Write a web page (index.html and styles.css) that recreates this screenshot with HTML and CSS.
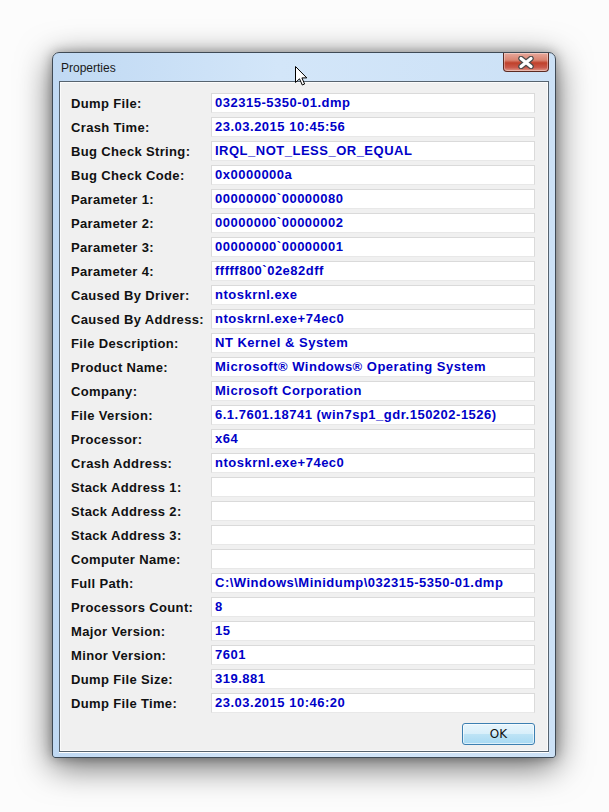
FILE: index.html
```html
<!DOCTYPE html>
<html lang="en">
<head>
  <meta charset="UTF-8">
  <meta name="viewport" content="width=device-width, initial-scale=1.0">
  <title>Properties</title>
  <link rel="stylesheet" href="styles.css">
</head>
<body>
  <div class="window">
    <div class="titlebar">
      <span class="title">Properties</span>
      <span class="close">
        <svg width="20" height="13" viewBox="0 0 20 13">
          <path d="M5 2.5 L15 10.5 M15 2.5 L5 10.5" stroke="#4a4a4a" stroke-width="5.5" stroke-linecap="round"/>
          <path d="M5 2.5 L15 10.5 M15 2.5 L5 10.5" stroke="#fff" stroke-width="3.2" stroke-linecap="round"/>
        </svg>
      </span>
    </div>
    <div class="client">
      <div class="props">
        <div class="row"><span class="label">Dump File:</span><span class="field">032315-5350-01.dmp</span></div>
        <div class="row"><span class="label">Crash Time:</span><span class="field">23.03.2015 10:45:56</span></div>
        <div class="row"><span class="label">Bug Check String:</span><span class="field">IRQL_NOT_LESS_OR_EQUAL</span></div>
        <div class="row"><span class="label">Bug Check Code:</span><span class="field">0x0000000a</span></div>
        <div class="row"><span class="label">Parameter 1:</span><span class="field">00000000`00000080</span></div>
        <div class="row"><span class="label">Parameter 2:</span><span class="field">00000000`00000002</span></div>
        <div class="row"><span class="label">Parameter 3:</span><span class="field">00000000`00000001</span></div>
        <div class="row"><span class="label">Parameter 4:</span><span class="field">fffff800`02e82dff</span></div>
        <div class="row"><span class="label">Caused By Driver:</span><span class="field">ntoskrnl.exe</span></div>
        <div class="row"><span class="label">Caused By Address:</span><span class="field">ntoskrnl.exe+74ec0</span></div>
        <div class="row"><span class="label">File Description:</span><span class="field">NT Kernel &amp; System</span></div>
        <div class="row"><span class="label">Product Name:</span><span class="field">Microsoft® Windows® Operating System</span></div>
        <div class="row"><span class="label">Company:</span><span class="field">Microsoft Corporation</span></div>
        <div class="row"><span class="label">File Version:</span><span class="field">6.1.7601.18741 (win7sp1_gdr.150202-1526)</span></div>
        <div class="row"><span class="label">Processor:</span><span class="field">x64</span></div>
        <div class="row"><span class="label">Crash Address:</span><span class="field">ntoskrnl.exe+74ec0</span></div>
        <div class="row"><span class="label">Stack Address 1:</span><span class="field"></span></div>
        <div class="row"><span class="label">Stack Address 2:</span><span class="field"></span></div>
        <div class="row"><span class="label">Stack Address 3:</span><span class="field"></span></div>
        <div class="row"><span class="label">Computer Name:</span><span class="field"></span></div>
        <div class="row"><span class="label">Full Path:</span><span class="field">C:\Windows\Minidump\032315-5350-01.dmp</span></div>
        <div class="row"><span class="label">Processors Count:</span><span class="field">8</span></div>
        <div class="row"><span class="label">Major Version:</span><span class="field">15</span></div>
        <div class="row"><span class="label">Minor Version:</span><span class="field">7601</span></div>
        <div class="row"><span class="label">Dump File Size:</span><span class="field">319.881</span></div>
        <div class="row"><span class="label">Dump File Time:</span><span class="field">23.03.2015 10:46:20</span></div>
      </div>
      <div class="actions">
        <button class="ok">OK</button>
      </div>
    </div>
  </div>

  <!-- mouse pointer over the title bar -->
  <svg class="cursor" width="13" height="20" viewBox="0 0 13 20">
    <path d="M0.5 0.5 L0.5 16.5 L4.5 12.8 L7.3 19 L9.6 18 L6.9 11.9 L11.8 11.9 Z" fill="#fff" stroke="#000" stroke-width="1"/>
  </svg>
</body>
</html>
```

FILE: styles.css
```css
* {margin:0; padding:0; box-sizing:border-box;}
html{background:#fcfcfc;}
body{
  font-family:"Liberation Sans", Arial, sans-serif;
  padding:52px 0 60px 52px;
}

.window{
  width:504px;
  height:706px;
  border:1px solid #3f4a55;
  border-radius:7px 7px 3px 3px;
  background:linear-gradient(90deg, #c0d9f3 0%, #d3e6f9 45%, #cce1f6 100%);
  padding:0 6px 5px 6px;
  box-shadow:0 8px 34px rgba(0,0,0,0.6), 0 0 12px rgba(0,0,0,0.3);
  display:flex;
  flex-direction:column;
}

.titlebar{
  height:28px;
  display:flex;
  justify-content:space-between;
  align-items:center;
}
.title{
  font-size:12px;
  color:#1a1a1a;
  padding-left:2px;
  padding-top:1px;
}
.close{
  align-self:flex-start;
  width:46px;
  height:19px;
  border:1px solid #5b2a22;
  border-top:none;
  border-radius:0 0 4px 4px;
  background:linear-gradient(#e8a99c 0%, #d98370 40%, #c0412b 55%, #c9584a 80%, #e19b8c 100%);
  display:flex;
  align-items:center;
  justify-content:center;
  box-shadow:inset 0 0 0 1px rgba(255,255,255,0.35);
}

.client{
  flex:1;
  background:#f0f0f0;
  border:1px solid #56636f;
  box-shadow:inset 0 0 0 1px #fbfbfb, 0 1px 0 #fff;
  padding:11px 13px 6px 11px;
  display:flex;
  flex-direction:column;
}

.props{
  display:flex;
  flex-direction:column;
  gap:4px;
}
.row{
  display:grid;
  grid-template-columns:140px 324px;
  height:20px;
  align-items:center;
}
.label{
  font-size:13px;
  font-weight:bold;
  letter-spacing:0.35px;
  color:#111;
}
.field{
  height:20px;
  background:#fff;
  border:1px solid #dadada;
  border-bottom-color:#e8e8e8;
  padding:0 3px;
  font-size:13px;
  font-weight:bold;
  letter-spacing:0.5px;
  color:#0000c8;
  line-height:18px;
  white-space:nowrap;
  overflow:hidden;
}

.actions{
  margin-top:10px;
  display:flex;
  justify-content:flex-end;
}
.ok{
  width:73px;
  height:22px;
  border:1px solid #3c7fb1;
  border-radius:3px;
  background:linear-gradient(#e8f5fc 0%, #d8effa 48%, #bde3f5 52%, #a7d9f3 100%);
  box-shadow:inset 0 0 0 1px rgba(255,255,255,0.6);
  font-family:"DejaVu Sans", sans-serif;
  font-size:12px;
  color:#111;
}

.cursor{
  position:absolute;
  left:295px;
  top:66px;
}
```
